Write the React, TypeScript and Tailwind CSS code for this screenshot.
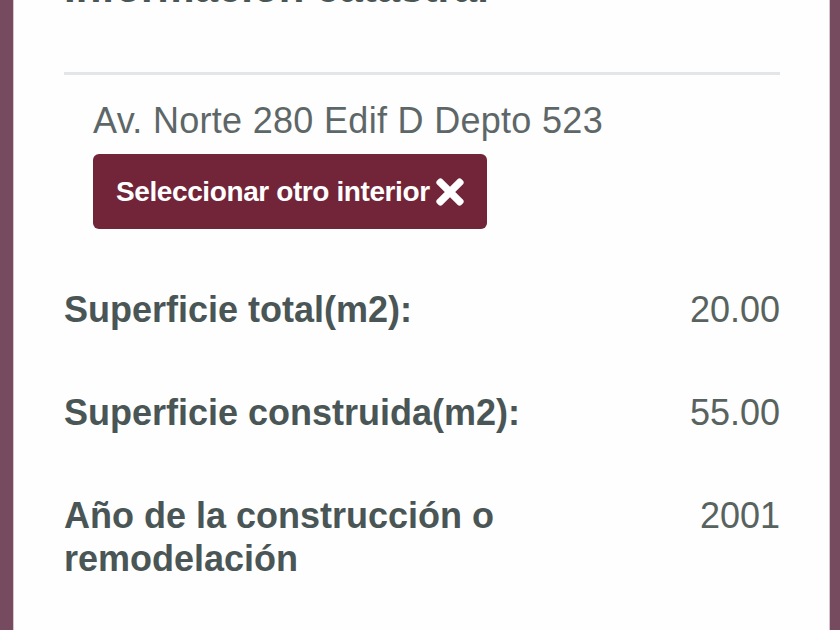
import { FaTimes } from "react-icons/fa";

const InfoRow: React.FC<{ label: React.ReactNode; value: string }> = ({ label, value }) => (
  <div className="flex justify-between items-start">
    <div className="font-bold text-[#4a5656] w-[460px]">{label}</div>
    <div className="text-[#58625f]">{value}</div>
  </div>
);

export default function App() {
  return (
    <div className="w-[840px] h-[630px] overflow-hidden bg-[#774b5f] flex font-['Liberation_Sans',Arial,sans-serif]">
      <div className="ml-[13px] w-[817px] h-full bg-[#fefefe] border-l border-r border-[#d9c3cc] pl-[50px] pr-[49px]">
        <h2 className="text-[42px] leading-[50px] font-bold text-[#4a5656] mt-[-37px]">Información catastral</h2>
        <div className="h-[3px] bg-[#e3e6e9] mt-[59px]"></div>

        <div className="pl-[29px] pt-[24px]">
          <p className="text-[36px] leading-[43px] text-[#5d6768] tracking-[0.3px]">Av. Norte 280 Edif D Depto 523</p>
          <button className="mt-[12px] h-[75px] w-[394px] rounded-[6px] bg-[#722539] text-white font-bold text-[28px] tracking-[-0.4px] flex items-center pl-[23px] gap-[6px] font-['Liberation_Sans',Arial,sans-serif]">
            Seleccionar otro interior
            <FaTimes className="w-[28px] h-[40px]" />
          </button>
        </div>

        <div className="mt-[59px] flex flex-col gap-[60px] text-[36px] leading-[43px]">
          <InfoRow label="Superficie total(m2):" value="20.00" />
          <InfoRow label="Superficie construida(m2):" value="55.00" />
          <InfoRow label={<>Año de la construcción o<br />remodelación</>} value="2001" />
        </div>
      </div>
    </div>
  );
}
